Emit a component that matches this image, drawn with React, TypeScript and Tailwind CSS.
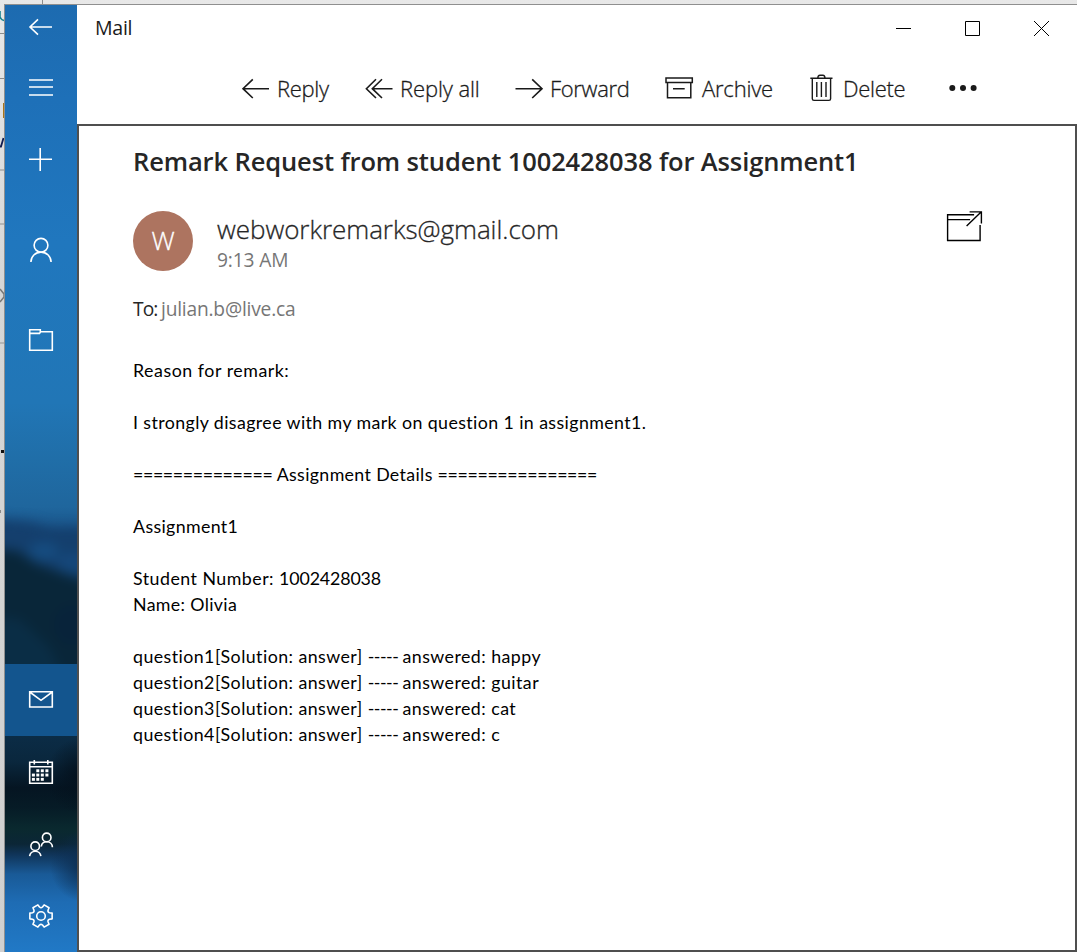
import React from "react";

const gearPath = (cx: number, cy: number) => {
  let d = "";
  for (let i = 0; i < 6; i++) {
    const a = (i * Math.PI) / 3;
    const at = (r: number, o: number) =>
      `${(cx + r * Math.cos(a + o)).toFixed(2)} ${(cy + r * Math.sin(a + o)).toFixed(2)}`;
    d += `${i ? "L" : "M"}${at(9.1, -0.36)}L${at(11.5, -0.25)}L${at(11.5, 0.25)}L${at(9.1, 0.36)}Q${at(7.6, Math.PI / 6)} ${at(9.1, Math.PI / 3 - 0.36)}`;
  }
  return `${d}Z`;
};

const calendarDots = [
  [37.8, 770.7], [42.3, 770.7], [46.9, 770.7],
  [33.4, 775], [37.8, 775], [42.3, 775], [46.9, 775],
  [33.4, 779.3], [37.8, 779.3], [42.3, 779.3],
];

const answers = ["happy", "guitar", "cat", "c"];

function Icon({ box, children, className = "" }: { box: [number, number, number, number]; children: React.ReactNode; className?: string }) {
  return (
    <svg viewBox={box.join(" ")} width={box[2]} height={box[3]} fill="none" stroke="currentColor" strokeWidth="1.6" className={`block shrink-0 ${className}`}>
      {children}
    </svg>
  );
}

function Backdrop() {
  return (
    <svg className="absolute inset-0" width="72" height="947" viewBox="5 5 72 947" preserveAspectRatio="none">
      <defs>
        <linearGradient id="sky" x1="0" y1="5" x2="0" y2="952" gradientUnits="userSpaceOnUse">
          <stop offset="0" stopColor="#1d6bb0" />
          <stop offset="0.1" stopColor="#1e70b8" />
          <stop offset="0.25" stopColor="#2077be" />
          <stop offset="0.42" stopColor="#2176b6" />
          <stop offset="0.48" stopColor="#206ea8" />
          <stop offset="0.53" stopColor="#1f669d" />
          <stop offset="0.56" stopColor="#184f84" />
        </linearGradient>
        <linearGradient id="deep" x1="0" y1="736" x2="0" y2="952" gradientUnits="userSpaceOnUse">
          <stop offset="0" stopColor="#0b2c46" />
          <stop offset="0.12" stopColor="#0a273d" />
          <stop offset="0.24" stopColor="#051522" />
          <stop offset="0.33" stopColor="#061b26" />
          <stop offset="0.43" stopColor="#0a292f" />
          <stop offset="0.5" stopColor="#0b2636" />
          <stop offset="0.55" stopColor="#10355a" />
          <stop offset="0.64" stopColor="#195a97" />
          <stop offset="0.77" stopColor="#1e6cb4" />
          <stop offset="1" stopColor="#2179c6" />
        </linearGradient>
        <radialGradient id="night"><stop offset="0" stopColor="#04111d" /><stop offset="1" stopColor="#04111d" stopOpacity="0" /></radialGradient>
        <radialGradient id="dusk"><stop offset="0" stopColor="#0d2d50" /><stop offset="1" stopColor="#0d2d50" stopOpacity="0" /></radialGradient>
        <filter id="soft" filterUnits="userSpaceOnUse" x="-60" y="460" width="200" height="280" colorInterpolationFilters="sRGB"><feGaussianBlur stdDeviation="6" /></filter>
      </defs>
      <rect x="5" y="5" width="72" height="660" fill="url(#sky)" />
      <g filter="url(#soft)">
        <path d="M-40 516L30 522L50 528L120 527V720H-40Z" fill="#143f6d" />
        <ellipse cx="44" cy="551" rx="15" ry="9" fill="#154c80" />
        <ellipse cx="74" cy="563" rx="17" ry="11" fill="#15477a" />
        <path d="M-40 545L18 551L35 563L60 572L120 592V720H-40Z" fill="#092639" />
        <path d="M-40 612L20 619L50 648L70 690H-40Z" fill="#0a2d45" />
        <ellipse cx="72" cy="625" rx="18" ry="20" fill="#08233a" />
      </g>
      <rect x="5" y="736" width="72" height="216" fill="url(#deep)" />
      <ellipse cx="80" cy="776" rx="34" ry="38" fill="url(#night)" />
      <ellipse cx="84" cy="866" rx="34" ry="36" fill="url(#dusk)" />
    </svg>
  );
}

function Sidebar() {
  return (
    <nav className="relative w-[72px] shrink-0 overflow-hidden text-white">
      <Backdrop />
      <div className="relative flex h-full flex-col">
        <Icon box={[5, 5, 72, 46]}><path d="M52 27H30M38 19.3L30 27L38 34.7" /></Icon>
        <Icon box={[5, 51, 72, 72]}><path d="M29 80H53M29 87H53M29 95H53" /></Icon>
        <Icon box={[5, 123, 72, 72]}><path d="M29 159.2H52M40.2 148V171" /></Icon>
        <Icon box={[5, 195, 72, 100]}><circle cx="41" cy="245.3" r="6.9" /><path d="M30.9 262a10.1 9.9 0 0 1 20.2 0" /></Icon>
        <Icon box={[5, 295, 72, 90]}><path d="M29.7 329.8H40.3V331.8H52.3V350.2H29.7ZM29.7 333.4H39.5L40.5 331.8" /></Icon>
        <div className="flex-1" />
        <div className="bg-[#13558e]">
          <Icon box={[5, 664, 72, 72]}><path d="M29.7 691.8H52.3V707H29.7ZM29.7 692L41 700.3L52.3 692" /></Icon>
        </div>
        <Icon box={[5, 736, 72, 72]}>
          <path d="M29.7 762.3H52.3V783.3H29.7ZM29.7 766.8H52.3M34.3 760V764.5M47.8 760V764.5" />
          {calendarDots.map(([x, y]) => <rect key={`${x}-${y}`} x={x - 1.5} y={y - 1.4} width="3" height="2.9" fill="currentColor" stroke="none" />)}
        </Icon>
        <Icon box={[5, 808, 72, 72]}>
          <circle cx="46.7" cy="837.4" r="4.3" /><path d="M41.3 846.5C41.6 843.4 43.8 841.7 46.7 841.7C50 841.7 52.4 844 52.4 847.2" />
          <circle cx="35.2" cy="846.2" r="4.3" /><path d="M29.6 856.2a5.7 5.7 0 0 1 11.3 0" />
        </Icon>
        <Icon box={[5, 880, 72, 72]}><path d={gearPath(41, 916)} strokeLinejoin="round" /><circle cx="41" cy="916" r="4.3" /></Icon>
      </div>
    </nav>
  );
}

function TitleBar() {
  return (
    <header className="flex h-[46px] items-center justify-between pl-[18px] text-[#1a1a1a]">
      <span className="text-[19.6px] leading-[46px] tracking-[-0.3px]">Mail</span>
      <div className="flex text-black">
        <Icon box={[869, 5, 69, 46]}><path d="M896 28.5H911" strokeWidth="1" /></Icon>
        <Icon box={[938, 5, 69, 46]}><path d="M965.5 21.5H979.5V35.5H965.5Z" strokeWidth="1" /></Icon>
        <Icon box={[1007, 5, 70, 46]}><path d="M1034 21L1049 36M1049 21L1034 36" strokeWidth="1" /></Icon>
      </div>
    </header>
  );
}

function Toolbar() {
  return (
    <div className="flex h-[73px] items-center pl-[160px] text-[22px] font-light tracking-[-0.3px] text-[#1a1a1a] [-webkit-text-stroke:0.3px]">
      <Icon box={[237, 68, 40, 40]}><path d="M269 88.7H243M252.8 79.3L243 88.7L252.8 98" /></Icon>
      <span className="w-[83px] whitespace-nowrap pt-[2px]">Reply</span>
      <Icon box={[360, 68, 40, 40]}><path d="M392.5 88.7H372.3M376 79.3L366.4 88.7L376 98M382 79.3L372.3 88.7L382 98" /></Icon>
      <span className="w-[110px] whitespace-nowrap pt-[2px] tracking-[-0.1px]">Reply all</span>
      <Icon box={[510, 68, 40, 40]}><path d="M515.5 88.7H542M532.2 79.3L542 88.7L532.2 98" /></Icon>
      <span className="w-[110px] whitespace-nowrap pt-[2px]">Forward</span>
      <Icon box={[660, 68, 42, 40]}><path d="M666 78H692.3V82.6H666ZM667.5 82.6V97.8H690.8V82.6M673 88.8H684.7" strokeWidth="1.5" /></Icon>
      <span className="w-[103px] whitespace-nowrap pt-[2px] tracking-[-0.2px]">Archive</span>
      <Icon box={[805, 68, 38, 40]}><path d="M810.3 78.3H832.5M812.3 78.3V98.8Q812.3 100.4 814 100.4H829Q830.6 100.4 830.6 98.8V78.3M817.8 78.3Q817.8 75.2 820 75.2H822.8Q825 75.2 825 78.3M816.8 82V97M821.4 82V97M826 82V97" strokeWidth="1.4" /></Icon>
      <span className="w-[102px] whitespace-nowrap pt-[2px]">Delete</span>
      <Icon box={[945, 68, 36, 40]}><g fill="currentColor" stroke="none"><circle cx="952.3" cy="88" r="3" /><circle cx="963" cy="88" r="3" /><circle cx="973.6" cy="88" r="3" /></g></Icon>
    </div>
  );
}

function Message() {
  return (
    <main className="flex-1 border-2 border-[#4f4f4f] bg-white pl-[54px] text-[#262626]">
      <h1 className="mt-[15px] h-10 whitespace-nowrap text-[25.5px] font-semibold leading-10 tracking-[-0.12px]">Remark Request from student 1002428038 for Assignment1</h1>
      <section className="mt-[30px] flex h-[60px]">
        <div className="flex size-[60px] items-center justify-center rounded-full bg-[#ad7460] pb-[2px] text-[26px] font-light text-white [-webkit-text-stroke:0.3px]">W</div>
        <div className="ml-6 w-[728px]">
          <p className="h-[37px] text-[26px] font-light leading-9 tracking-[-0.05px] [-webkit-text-stroke:0.3px]">webworkremarks@gmail.com</p>
          <p className="h-6 text-[19.2px] leading-6 tracking-[-0.15px] text-[#767676]">9:13 AM</p>
        </div>
        <Icon box={[945.4, 211, 40, 60]} className="text-black"><path d="M974.5 214.8H948V240.5H980.5V225M948 219.6H970.5M967 226L981.5 212M970 211.9H981.8V223.5" strokeWidth="1.4" /></Icon>
      </section>
      <p className="mt-[26px] flex h-6 text-[19.2px] leading-6">
        <span className="w-[28px] tracking-[-0.9px]">To:</span>
        <span className="tracking-[-0.2px] text-[#767676]">julian.b@live.ca</span>
      </p>
      <article className="mt-9 whitespace-pre font-['Lato'] text-[17.8px] leading-[26px] tracking-[0.35px] text-black">
        <p className="tracking-[0.54px]">Reason for remark:</p>
        <p className="mt-[26px] tracking-[0.4px]">I strongly disagree with my mark on question 1 in assignment1.</p>
        <p className="mt-[26px]">
          <span className="tracking-[-0.36px]">==============</span>{" Assignment Details "}<span className="tracking-[-0.35px]">================</span>
        </p>
        <p className="mt-[26px]">Assignment1</p>
        <p className="mt-[26px]"><span className="tracking-[0.48px]">{"Student Number: "}</span><span className="tracking-[-0.12px]">1002428038</span></p>
        <p>Name: Olivia</p>
        <div className="mt-[26px]">
          {answers.map((answer, i) => (
            <p key={answer}>
              <span className="tracking-[0.44px]">{`question${i + 1}[Solution: answer] `}</span>
              <span className="tracking-[-0.46px]">{"----- "}</span>
              <span className="tracking-[0.46px]">{`answered: ${answer}`}</span>
            </p>
          ))}
        </div>
      </article>
    </main>
  );
}

function DesktopEdge() {
  return (
    <svg className="absolute inset-0" width="1077" height="952" viewBox="0 0 1077 952" fill="none">
      <path d="M42.5 0V4M0 33.5H4M0 78.5H4" stroke="#8c8c8c" />
      <path d="M0 170H4M0 224H4M0 343H4" stroke="#b5b5b5" strokeWidth="2" />
      <path d="M0 11V17Q1 20 4 20.5" stroke="#17838f" strokeWidth="1.6" />
      <path d="M3.5 103V118" stroke="#a87518" />
      <path d="M3.5 138L1 146.5H0" stroke="#101c50" strokeWidth="1.8" />
      <path d="M0 289L4 294V297L0 302" stroke="#777" strokeWidth="1.5" />
      <rect x="1" y="450" width="3" height="3" fill="#111" />
      <rect x="0" y="510" width="1" height="3" fill="#888" />
    </svg>
  );
}

export default function App() {
  return (
    <div className="relative h-[952px] w-[1077px] overflow-hidden bg-gradient-to-b from-[#e8e8e8] via-[#d6d6d6] via-30% to-[#d0d0d0] pl-1 pt-1 font-['Open_Sans',sans-serif]">
      <DesktopEdge />
      <div className="relative flex h-[948px] border-l border-t border-[#8f8f8f] bg-white">
        <Sidebar />
        <div className="flex min-w-0 flex-1 flex-col bg-white">
          <TitleBar />
          <Toolbar />
          <Message />
        </div>
      </div>
    </div>
  );
}
